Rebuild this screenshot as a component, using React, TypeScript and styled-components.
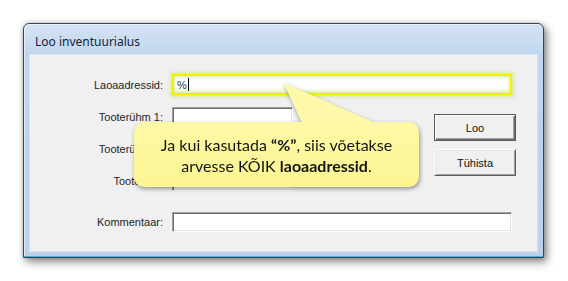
import React from "react";
import styled, { createGlobalStyle } from "styled-components";

const GlobalStyle = createGlobalStyle`
  html, body { margin: 0; padding: 0; background: #ffffff; }
  body {
    width: 568px;
    height: 281px;
    overflow: hidden;
    font-family: "Liberation Sans", Arial, sans-serif;
  }
`;

const Stage = styled.div`
  padding: 23px 0 0 23px;
`;

const Window = styled.div`
  width: 521px;
  height: 235px;
  box-sizing: border-box;
  border: 1px solid #3a4250;
  border-radius: 6px 6px 0 0;
  background: linear-gradient(#d4e3f4 0px, #c0d6ee 31px, #b9d1ea 100%);
  box-shadow: 3px 4px 9px rgba(0, 0, 0, 0.45), 0 0 5px rgba(0, 0, 0, 0.22),
    inset 0 -1px 0 #46b2d8, inset 1px 1px 0 rgba(255, 255, 255, 0.55);
  display: flex;
  flex-direction: column;
`;

const TitleBar = styled.div`
  height: 31px;
  box-sizing: border-box;
  padding: 10px 0 0 11px;
  font-family: "Noto Sans", "Open Sans", sans-serif;
  font-size: 12px;
  line-height: 16px;
  color: #16223a;
`;

const Client = styled.div`
  position: relative;
  flex: 1;
  margin: 0 6px 6px 6px;
  background: #f0f0f0;
  box-shadow: 0 0 0 1px rgba(255, 255, 255, 0.35);
  display: grid;
  grid-template-columns: 133px 253px 82px;
  grid-template-rows: 21px 20px 20px 20px 29px;
  column-gap: 9px;
  row-gap: 12px;
  padding-top: 19px;
  align-content: start;
`;

const Label = styled.div<{ $row: number; $push?: boolean }>`
  grid-column: 1;
  grid-row: ${(p) => p.$row};
  display: flex;
  align-items: center;
  justify-content: flex-end;
  padding-top: ${(p) => (p.$push ? "9px" : "0")};
  font-size: 11px;
  color: #1e1e1e;
  white-space: nowrap;
`;

const Field = styled.div<{ $row: number; $wide?: boolean }>`
  grid-column: ${(p) => (p.$wide ? "2 / span 2" : "2")};
  grid-row: ${(p) => p.$row};
  align-self: end;
  width: ${(p) => (p.$wide ? "340px" : "121px")};
  height: 20px;
  box-sizing: border-box;
  background: #ffffff;
  border: 1px solid;
  border-color: #a0a0a0 #ffffff #ffffff #a0a0a0;
  box-shadow: inset 1px 1px 0 #6b6b6b, inset -1px -1px 0 #e3e3e3;
`;

const HighlightField = styled.div`
  grid-column: 2 / span 2;
  grid-row: 1;
  width: 340px;
  height: 21px;
  box-sizing: border-box;
  border: 2px solid #f2f000;
  background: linear-gradient(#f4fbe6, #ffffff 35%, #ffffff 65%, #eef7dc);
  box-shadow: 0 0 3px 2px rgba(205, 232, 120, 0.7),
    inset 0 0 3px 1px rgba(200, 228, 130, 0.6);
  display: flex;
  align-items: center;
  padding-left: 3px;
  font-size: 11px;
  color: #333;
`;

const Caret = styled.span`
  display: inline-block;
  width: 1px;
  height: 13px;
  margin-left: 1px;
  background: #000;
`;

const ButtonColumn = styled.div`
  grid-column: 3;
  grid-row: 2 / span 3;
  align-self: start;
  margin-top: 7px;
  display: flex;
  flex-direction: column;
  gap: 8px;
`;

const Button = styled.button<{ $default?: boolean }>`
  width: 82px;
  height: 27px;
  box-sizing: border-box;
  padding: 0;
  margin: 0;
  background: #f0f0f0;
  font-family: "Liberation Sans", Arial, sans-serif;
  font-size: 11px;
  color: #111;
  border: 1px solid;
  border-color: ${(p) =>
    p.$default ? "#5a5a5a" : "#ffffff #5e5e5e #5e5e5e #ffffff"};
  box-shadow: ${(p) =>
    p.$default
      ? "inset 1px 1px 0 #ffffff, inset -1px -1px 0 #696969, inset -2px -2px 0 #a0a0a0"
      : "inset 1px 1px 0 #e6e6e6, inset -1px -1px 0 #a0a0a0"};
`;

const Callout = styled.div`
  position: absolute;
  left: 104px;
  top: 67px;
  width: 285px;
  height: 65px;
  box-sizing: border-box;
  border-radius: 10px;
  background: linear-gradient(#fdf9a6, #fbf592);
  filter: drop-shadow(1px 2px 2px rgba(0, 0, 0, 0.38));
  display: flex;
  flex-direction: column;
  align-items: center;
  justify-content: center;
  font-family: Lato, "Open Sans", sans-serif;
  font-size: 16px;
  line-height: 21px;
  color: #141414;

  &::before {
    content: "";
    position: absolute;
    left: 149px;
    top: -39px;
    width: 100px;
    height: 42px;
    background: #fdf9a8;
    clip-path: polygon(0.5px 0, 1.5px 0, 97px 42px, 20px 42px);
  }
`;

const Line = styled.span`
  position: relative;
  white-space: nowrap;
`;

export default function App() {
  return (
    <>
      <GlobalStyle />
      <Stage>
        <Window>
          <TitleBar>Loo inventuurialus</TitleBar>
          <Client>
            <Label $row={1}>Laoaadressid:</Label>
            <HighlightField>
              %<Caret />
            </HighlightField>

            <Label $row={2}>Tooterühm 1:</Label>
            <Field $row={2} />

            <Label $row={3}>Tooterühm 2:</Label>
            <Field $row={3} />

            <Label $row={4}>Tootesilm:</Label>
            <Field $row={4} />

            <Label $row={5} $push>
              Kommentaar:
            </Label>
            <Field $row={5} $wide />

            <ButtonColumn>
              <Button $default>Loo</Button>
              <Button>Tühista</Button>
            </ButtonColumn>

            <Callout>
              <Line>
                Ja kui kasutada <b>“%”</b>, siis võetakse
              </Line>
              <Line>
                arvesse KÕIK <b>laoaadressid</b>.
              </Line>
            </Callout>
          </Client>
        </Window>
      </Stage>
    </>
  );
}
